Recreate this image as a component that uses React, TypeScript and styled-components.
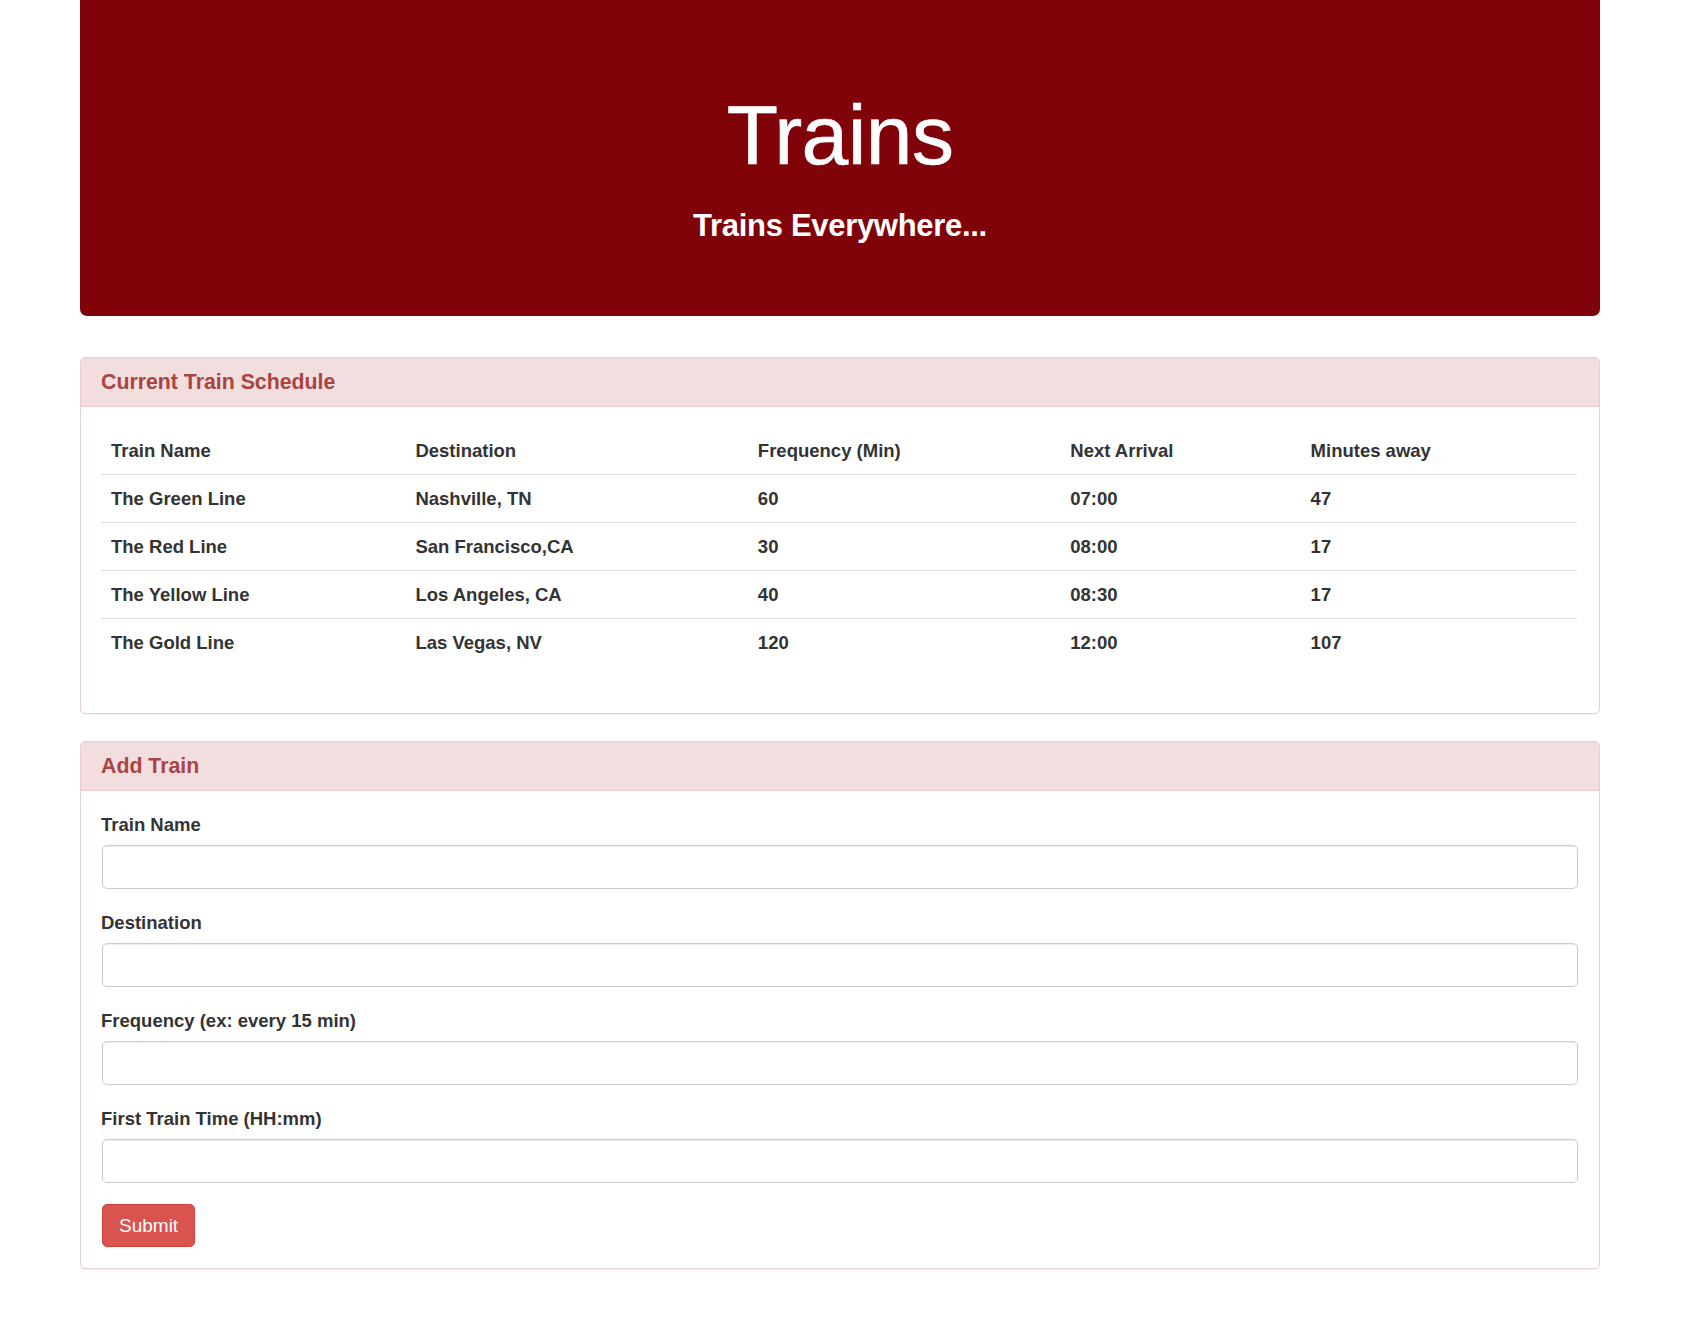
import {FC} from 'react'
import styled, {createGlobalStyle} from 'styled-components'

const COLOR = {
  MAROON: '#7f0309',
  TEXT: '#333333',
  DANGER_TEXT: '#a94442',
  DANGER_BG: '#f2dede',
  DANGER_BORDER: '#ebccd1',
  RULE: '#dddddd',
  BTN: '#d9534f',
  BTN_BORDER: '#d43f3a',
}

interface Train {
  name: string
  destination: string
  frequency: number
  nextArrival: string
  minutesAway: number
}

const trains: Train[] = [
  {name: 'The Green Line', destination: 'Nashville, TN', frequency: 60, nextArrival: '07:00', minutesAway: 47},
  {name: 'The Red Line', destination: 'San Francisco,CA', frequency: 30, nextArrival: '08:00', minutesAway: 17},
  {name: 'The Yellow Line', destination: 'Los Angeles, CA', frequency: 40, nextArrival: '08:30', minutesAway: 17},
  {name: 'The Gold Line', destination: 'Las Vegas, NV', frequency: 120, nextArrival: '12:00', minutesAway: 107},
]

const columns = [
  {label: 'Train Name', width: 304},
  {label: 'Destination', width: 342},
  {label: 'Frequency (Min)', width: 312},
  {label: 'Next Arrival', width: 240},
  {label: 'Minutes away', width: 276},
]

const fields = ['Train Name', 'Destination', 'Frequency (ex: every 15 min)', 'First Train Time (HH:mm)']

const GlobalStyle = createGlobalStyle`
  * { box-sizing: border-box; }
  body {
    margin: 0;
    background: #fff;
    color: ${COLOR.TEXT};
    font-family: "Liberation Sans", Arial, Helvetica, sans-serif;
    font-size: 18.5px;
  }
`

const App: FC = () => (
  <>
    <GlobalStyle />
    <Page>
      <Jumbotron>
        <Heading>Trains</Heading>
        <Tagline>Trains Everywhere...</Tagline>
      </Jumbotron>

      <Panel>
        <PanelHeading>Current Train Schedule</PanelHeading>
        <PanelBody>
          <Table>
            <thead>
              <tr>
                {columns.map(col => (
                  <Th key={col.label} $width={col.width}>{col.label}</Th>
                ))}
              </tr>
            </thead>
            <tbody>
              {trains.map(t => (
                <tr key={t.name}>
                  <Td>{t.name}</Td>
                  <Td>{t.destination}</Td>
                  <Td>{t.frequency}</Td>
                  <Td>{t.nextArrival}</Td>
                  <Td>{t.minutesAway}</Td>
                </tr>
              ))}
            </tbody>
          </Table>
        </PanelBody>
      </Panel>

      <Panel>
        <PanelHeading>Add Train</PanelHeading>
        <FormBody>
          <form onSubmit={e => e.preventDefault()}>
            {fields.map(label => (
              <FormGroup key={label}>
                <Label>{label}</Label>
                <Input type="text" />
              </FormGroup>
            ))}
            <SubmitButton type="submit">Submit</SubmitButton>
          </form>
        </FormBody>
      </Panel>
    </Page>
  </>
)

const Page = styled.div`
  width: 1520px;
  margin-left: 80px;
  padding-bottom: 60px;
`
const Jumbotron = styled.header`
  display: flex;
  flex-direction: column;
  align-items: center;
  background: ${COLOR.MAROON};
  color: #fff;
  height: 316px;
  padding-top: 89px;
  border-radius: 0 0 7px 7px;
  margin-bottom: 41px;
`
const Heading = styled.h1`
  margin: 0;
  font-size: 84px;
  line-height: 92px;
  font-weight: 400;
  letter-spacing: -0.6px;
  -webkit-text-stroke: 0.6px #fff;
`
const Tagline = styled.p`
  margin: 28px 0 0;
  font-size: 31px;
  line-height: 33px;
  font-weight: 700;
  letter-spacing: -0.3px;
`
const Panel = styled.section`
  background: #fff;
  border: 1px solid ${COLOR.DANGER_BORDER};
  border-radius: 5px;
  box-shadow: 0 1px 1px rgba(0, 0, 0, 0.05);
  margin-bottom: 27px;
  overflow: hidden;
`
const PanelHeading = styled.h3`
  margin: 0;
  padding: 12px 20px;
  background: ${COLOR.DANGER_BG};
  border-bottom: 1px solid ${COLOR.DANGER_BORDER};
  color: ${COLOR.DANGER_TEXT};
  font-size: 21.3px;
  line-height: 24px;
  font-weight: 700;
`
const PanelBody = styled.div`
  padding: 20px 22px 20px 20px;
`
const FormBody = styled(PanelBody)`
  padding-top: 21px;
  padding-bottom: 21px;
`
const Table = styled.table`
  width: 100%;
  border-collapse: collapse;
  margin-bottom: 27px;
  font-weight: 700;
  table-layout: fixed;
`
const Th = styled.th<{$width: number}>`
  width: ${p => p.$width}px;
  text-align: left;
  padding: 11px 10px;
  line-height: 25px;
  border-bottom: 1px solid ${COLOR.RULE};
`
const Td = styled.td`
  padding: 11px 10px;
  line-height: 25px;
  border-top: 1px solid ${COLOR.RULE};
  tr:first-child > & {
    border-top: none;
  }
`
const FormGroup = styled.div`
  display: flex;
  flex-direction: column;
  margin-bottom: 21px;
`
const Label = styled.label`
  font-weight: 700;
  line-height: 25px;
  margin-bottom: 8px;
`
const Input = styled.input`
  height: 44px;
  width: 100%;
  margin-left: 1px;
  padding: 8px 15px;
  font: inherit;
  border: 1px solid #cccccc;
  border-radius: 5px;
  box-shadow: inset 0 1px 1px rgba(0, 0, 0, 0.075);
  background: #fff;
`
const SubmitButton = styled.button`
  margin-left: 1px;
  height: 43px;
  padding: 8px 16px;
  font-family: inherit;
  font-size: 19px;
  line-height: 25px;
  color: #fff;
  background: ${COLOR.BTN};
  border: 1px solid ${COLOR.BTN_BORDER};
  border-radius: 5px;
  cursor: pointer;
`

export default App
